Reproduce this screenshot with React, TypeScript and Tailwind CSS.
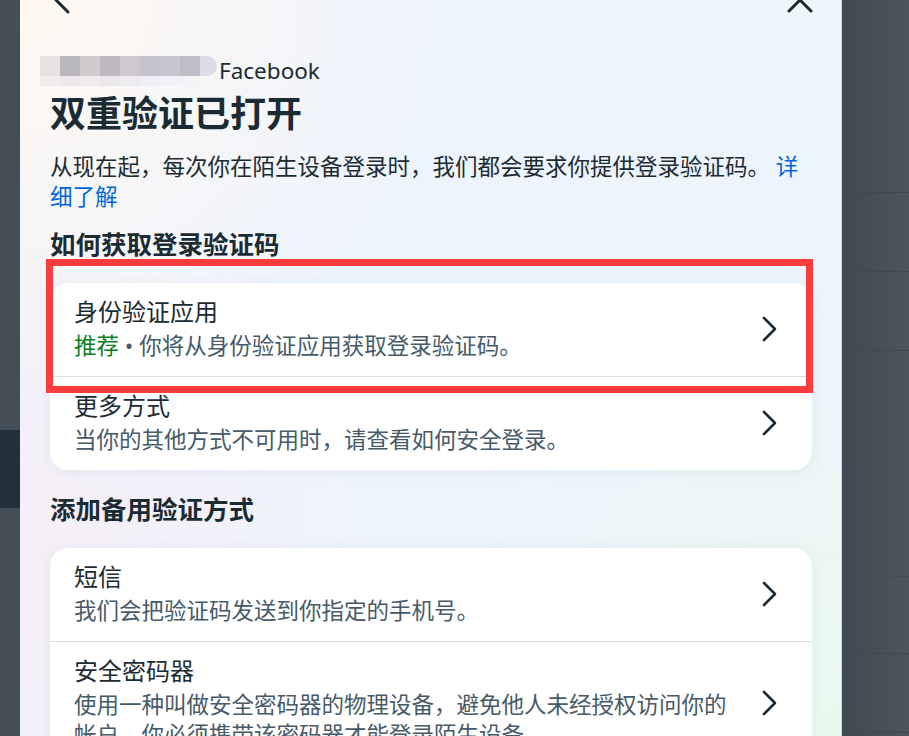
import React from "react";

const FONT = "font-[family-name:'Noto_Sans','Noto_Sans_CJK_SC',sans-serif]";

const Chevron = () => (
  <svg width="20" height="28" viewBox="0 0 20 28" fill="none" className="shrink-0">
    <polyline
      points="4,3 15,14 4,25"
      stroke="#1c2b33"
      strokeWidth="2.6"
      strokeLinecap="round"
      strokeLinejoin="round"
    />
  </svg>
);

type Item = { title: string; sub: React.ReactNode };

const Row = ({ item, last }: { item: Item; last?: boolean }) => (
  <div className={last ? "" : "border-b border-[#dadee3]"}>
    <div className="flex items-center pl-[24px] pr-[32px] gap-[18px] pt-[14px] pb-[15px]">
      <div className="flex-1 min-w-0">
        <div className="text-[24px] leading-[30px] text-[#1c2b33]">{item.title}</div>
        <div className="mt-[4px] text-[22.5px] leading-[30px] text-[#465a69]">{item.sub}</div>
      </div>
      <Chevron />
    </div>
  </div>
);

const Card = ({ items }: { items: Item[] }) => (
  <div className="bg-white rounded-[18px] shadow-[0_2px_14px_rgba(60,80,120,0.07)] overflow-hidden">
    {items.map((it, i) => (
      <Row key={i} item={it} last={i === items.length - 1} />
    ))}
  </div>
);

const BlurName = () => {
  const top = ["#e7e3e3", "#b9b7bc", "#cfcbcf", "#bdbbc1", "#cdc9ce", "#c6c3cb", "#c8c7d1", "#bebec7"];
  const bottom = ["#f1edee", "#ece8ec", "#efebef", "#ebe8ed", "#eeebf0", "#f0eef4", "#f2f1f7", "#f4f3f8"];
  return (
    <div className="flex flex-col ml-[-10px] w-[177px]">
      <div className="flex h-[20px]">
        {top.map((c, i) => (
          <div key={i} className="w-[20px] h-full" style={{ backgroundColor: c }} />
        ))}
        <div className="w-[17px] h-full rounded-r-[10px] bg-[#dcdce6]" />
      </div>
      <div className="flex h-[10px]">
        {bottom.map((c, i) => (
          <div key={i} className="w-[20px] h-full" style={{ backgroundColor: c }} />
        ))}
      </div>
    </div>
  );
};

export default function App() {
  const card1: Item[] = [
    {
      title: "身份验证应用",
      sub: (
        <>
          <span className="text-[#0b7d1f]">推荐</span> • 你将从身份验证应用获取登录验证码。
        </>
      ),
    },
    { title: "更多方式", sub: "当你的其他方式不可用时，请查看如何安全登录。" },
  ];
  const card2: Item[] = [
    { title: "短信", sub: "我们会把验证码发送到你指定的手机号。" },
    {
      title: "安全密码器",
      sub: "使用一种叫做安全密码器的物理设备，避免他人未经授权访问你的帐户。你必须携带该密码器才能登录陌生设备。",
    },
  ];

  return (
    <div className={`w-[909px] h-[736px] overflow-hidden flex bg-[#444f57] ${FONT}`}>
      {/* left backdrop strip */}
      <div className="w-[20px] shrink-0 h-full flex flex-col">
        <div className="h-[430px] bg-[#434e56]" />
        <div className="h-[78px] bg-[#23303a]" />
        <div className="flex-1 bg-[#434e56]" />
      </div>

      {/* modal */}
      <div className="w-[822px] shrink-0 h-full overflow-hidden border-r border-[#cfd6dc] bg-[#eef4fd] bg-[image:radial-gradient(circle_at_0%_0%,#fff8f1_0%,rgba(255,248,241,0)_38%),radial-gradient(circle_at_0%_75%,#f6eef6_0%,rgba(246,238,246,0)_35%),radial-gradient(circle_at_100%_100%,#e9f9ef_0%,rgba(233,249,239,0)_40%)]">
        <div className="flex flex-col pl-[30px] pr-[29px]">
          {/* header (scrolled partly out of view) */}
          <div className="h-[32px] mt-[-16px] flex items-center justify-between">
            <svg width="32" height="32" viewBox="0 0 32 32" fill="none">
              <polyline points="18,4 6,16 18,28" stroke="#1c2b33" strokeWidth="3" strokeLinecap="round" strokeLinejoin="round" />
            </svg>
            <svg width="32" height="32" viewBox="0 0 32 32" fill="none" className="mr-[-4px]">
              <line x1="5" y1="5" x2="27" y2="27" stroke="#1c2b33" strokeWidth="3" strokeLinecap="round" />
              <line x1="27" y1="5" x2="5" y2="27" stroke="#1c2b33" strokeWidth="3" strokeLinecap="round" />
            </svg>
          </div>

          <div className="mt-[40px] flex items-center h-[30px]">
            <BlurName />
            <span className="ml-[2px] text-[22.5px] leading-[30px] text-[#1c2b33]">Facebook</span>
          </div>

          <h1 className="mt-[6px] text-[36px] leading-[44px] font-bold text-[#1c2b33]">双重验证已打开</h1>

          <p className="mt-[16px] text-[22.5px] leading-[30px] text-[#1c2b33]">
            从现在起，每次你在陌生设备登录时，我们都会要求你提供登录验证码。 <span className="text-[#0064e0]">详细了解</span>
          </p>

          <h2 className="mt-[15px] text-[25.5px] leading-[34px] font-bold text-[#1c2b33]">如何获取登录验证码</h2>

          <div className="relative mt-[22px]">
            <Card items={card1} />
            <div className="absolute top-[-24px] left-[-4px] w-[767px] h-[134px] border-[7px] border-[#fb3c3c] pointer-events-none" />
          </div>

          <h2 className="mt-[22px] text-[25.5px] leading-[34px] font-bold text-[#1c2b33]">添加备用验证方式</h2>

          <div className="mt-[22px]">
            <Card items={card2} />
          </div>
        </div>
      </div>

      {/* right backdrop strip */}
      <div className="flex-1 h-full flex flex-col bg-[linear-gradient(90deg,#3f4a52,#4a555d)]">
        <div className="h-[193px] border-b border-[#3f4950]" />
        <div className="h-[79px] border-b border-[#3f4950]" />
        <div className="h-[79px] border-b border-[#3f4950]" />
        <div className="h-[226px] border-b border-[#424c54]" />
        <div className="h-[77px] border-b border-[#3f4950]" />
        <div className="h-[79px] border-b border-[#3f4950]" />
        <div className="flex-1" />
      </div>
    </div>
  );
}
